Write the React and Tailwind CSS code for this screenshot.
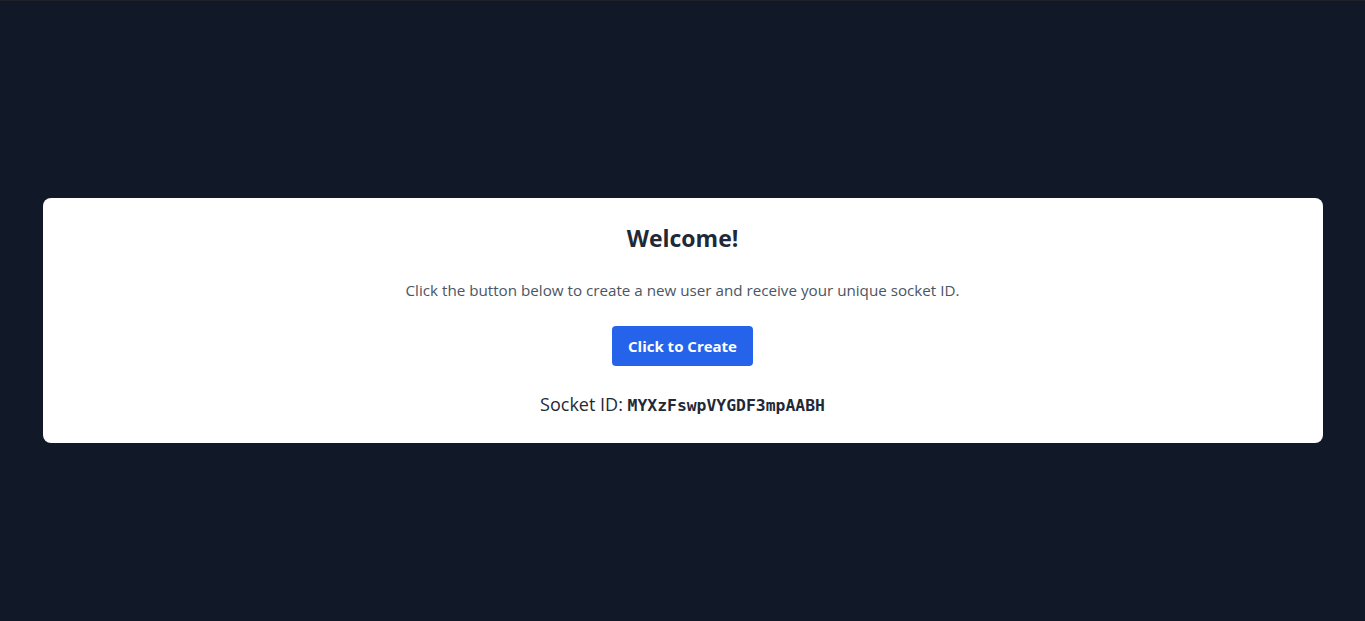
export default function App() {
  return (
    <div
      className="min-h-screen bg-[#111827] border-t border-[#1e2226] px-4 pt-[197px]"
      style={{ fontFamily: '"Open Sans", "Noto Sans", sans-serif' }}
    >
      <div className="mx-auto max-w-7xl rounded-lg bg-white px-6 pt-6 pb-[23px] text-center">
        <h1 className="text-[23px] leading-8 font-bold text-[#1f2937]">Welcome!</h1>
        <p className="mt-6 text-[15.2px] leading-6 text-[#4b5563]">
          Click the button below to create a new user and receive your unique socket ID.
        </p>
        <button className="mt-6 h-10 rounded bg-[#2563eb] px-4 text-[15px] font-bold text-white">
          Click to Create
        </button>
        <p className="mt-6 text-lg leading-7 text-[#1f2937]">
          Socket ID:{" "}
          <span
            className="text-[16.4px] font-semibold"
            style={{ fontFamily: '"DejaVu Sans Mono", monospace' }}
          >
            MYXzFswpVYGDF3mpAABH
          </span>
        </p>
      </div>
    </div>
  );
}
